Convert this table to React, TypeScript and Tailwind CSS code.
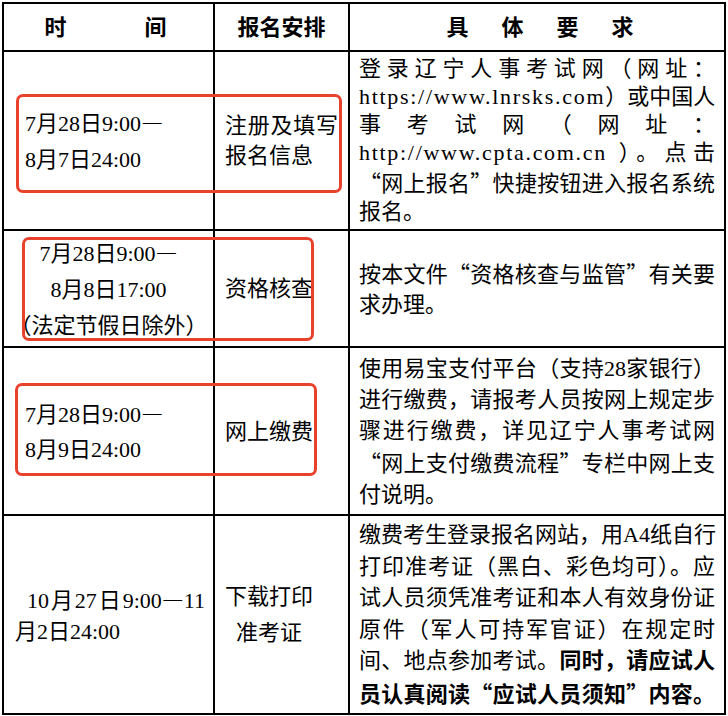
import React from 'react';

type Line = { text: React.ReactNode; full?: boolean };

// one rendered line of a cell; full lines are stretched edge to edge like the source doc
const Lines: React.FC<{ lines: Line[]; lh: string }> = ({ lines, lh }) => (
    <div className={lh}>
        {lines.map((l, i) => (
            <div key={i} className={l.full ? 'text-justify [text-align-last:justify] whitespace-nowrap' : 'whitespace-nowrap'}>
                {l.text}
            </div>
        ))}
    </div>
);

const Url: React.FC<{ children: React.ReactNode }> = ({ children }) => (
    <span className="tracking-[1.7px]">{children}</span>
);

// full-width punctuation taken from the CJK face
const Cj: React.FC<{ children: React.ReactNode }> = ({ children }) => (
    <span className="font-['Noto_Sans_CJK_SC',sans-serif]">{children}</span>
);

const cell = 'border-2 border-black align-middle p-0';

export default function App() {
    return (
        <div lang="zh-CN" className="relative w-[728px] h-[716px] bg-white pt-[2px] pl-[2px] text-[22px] text-black font-['Liberation_Serif','Noto_Sans_CJK_SC',serif]">
            <table className="table-fixed border-collapse w-[722px]">
                <colgroup>
                    <col className="w-[211px]" />
                    <col className="w-[135px]" />
                    <col className="w-[376px]" />
                </colgroup>
                <tbody>
                    <tr>
                        <td className={`${cell} h-[48px] font-bold`}>
                            <div className="flex justify-center gap-[78px] pr-[6px]">
                                <span>时</span>
                                <span>间</span>
                            </div>
                        </td>
                        <td className={`${cell} font-bold text-center`}>报名安排</td>
                        <td className={`${cell} font-bold`}>
                            <div className="flex justify-center gap-[33px] pl-[6px]">
                                <span>具</span>
                                <span>体</span>
                                <span>要</span>
                                <span>求</span>
                            </div>
                        </td>
                    </tr>

                    <tr>
                        <td className={`${cell} h-[179px] pl-[21px]`}>
                            <Lines lh="leading-[36px]" lines={[{ text: <>7月28日9:00<Cj>—</Cj></> }, { text: '8月7日24:00' }]} />
                        </td>
                        <td className={`${cell} px-[10px]`}>
                            <Lines lh="leading-[30px]" lines={[{ text: '注册及填写', full: true }, { text: '报名信息' }]} />
                        </td>
                        <td className={`${cell} px-[9px]`}>
                            <Lines
                                lh="leading-[28px]"
                                lines={[
                                    { text: '登录辽宁人事考试网（网址：', full: true },
                                    { text: <><Url>https://www.lnrsks.com</Url>）或中国人</>, full: true },
                                    { text: '事考试网（网址：', full: true },
                                    { text: <><Url>http://www.cpta.com.cn</Url> ）。点击</>, full: true },
                                    { text: <><Cj>“</Cj>网上报名<Cj>”</Cj>快捷按钮进入报名系统</>, full: true },
                                    { text: '报名。' },
                                ]}
                            />
                        </td>
                    </tr>

                    <tr>
                        <td className={`${cell} h-[117px] text-center`}>
                            <Lines
                                lh="leading-[36px]"
                                lines={[{ text: <>7月28日9:00<Cj>—</Cj></> }, { text: '8月8日17:00' }, { text: '（法定节假日除外）' }]}
                            />
                        </td>
                        <td className={`${cell} px-[10px]`}>资格核查</td>
                        <td className={`${cell} px-[9px]`}>
                            <Lines
                                lh="leading-[30px]"
                                lines={[{ text: <>按本文件<Cj>“</Cj>资格核查与监管<Cj>”</Cj>有关要</>, full: true }, { text: '求办理。' }]}
                            />
                        </td>
                    </tr>

                    <tr>
                        <td className={`${cell} h-[168px] pl-[21px]`}>
                            <Lines lh="leading-[35px]" lines={[{ text: <>7月28日9:00<Cj>—</Cj></> }, { text: '8月9日24:00' }]} />
                        </td>
                        <td className={`${cell} px-[10px]`}>网上缴费</td>
                        <td className={`${cell} px-[9px]`}>
                            <Lines
                                lh="leading-[31px]"
                                lines={[
                                    { text: '使用易宝支付平台（支持28家银行）', full: true },
                                    { text: '进行缴费，请报考人员按网上规定步', full: true },
                                    { text: '骤进行缴费，详见辽宁人事考试网', full: true },
                                    { text: <><Cj>“</Cj>网上支付缴费流程<Cj>”</Cj>专栏中网上支</>, full: true },
                                    { text: '付说明。' },
                                ]}
                            />
                        </td>
                    </tr>

                    <tr>
                        <td className={`${cell} h-[199px] pl-[11px] pr-[8px]`}>
                            <div className="leading-[31px]">
                                <div className="pl-[12px] text-justify [text-align-last:justify] whitespace-nowrap">10月27日9:00<Cj>—</Cj>11</div>
                                <div>月2日24:00</div>
                            </div>
                        </td>
                        <td className={`${cell} pl-[10px]`}>
                            <div className="inline-block text-center leading-[36px]">
                                <div>下载打印</div>
                                <div>准考证</div>
                            </div>
                        </td>
                        <td className={`${cell} px-[9px]`}>
                            <Lines
                                lh="leading-[31.5px]"
                                lines={[
                                    { text: '缴费考生登录报名网站，用A4纸自行', full: true },
                                    { text: '打印准考证（黑白、彩色均可）。应', full: true },
                                    { text: '试人员须凭准考证和本人有效身份证', full: true },
                                    { text: '原件（军人可持军官证）在规定时', full: true },
                                    { text: <>间、地点参加考试。<b>同时，请应试人</b></>, full: true },
                                    { text: <b>员认真阅读<Cj>“</Cj>应试人员须知<Cj>”</Cj>内容。</b>, full: true },
                                ]}
                            />
                        </td>
                    </tr>
                </tbody>
            </table>

            {/* red highlight boxes drawn over the first three rows */}
            <div className="absolute left-[16px] top-[94px] w-[326px] h-[99px] border-[3px] border-[#e8412c] rounded-[7px]" />
            <div className="absolute left-[22px] top-[237px] w-[292px] h-[104px] border-[3px] border-[#e8412c] rounded-[7px]" />
            <div className="absolute left-[15px] top-[383px] w-[302px] h-[93px] border-[3px] border-[#e8412c] rounded-[7px]" />
        </div>
    );
}
